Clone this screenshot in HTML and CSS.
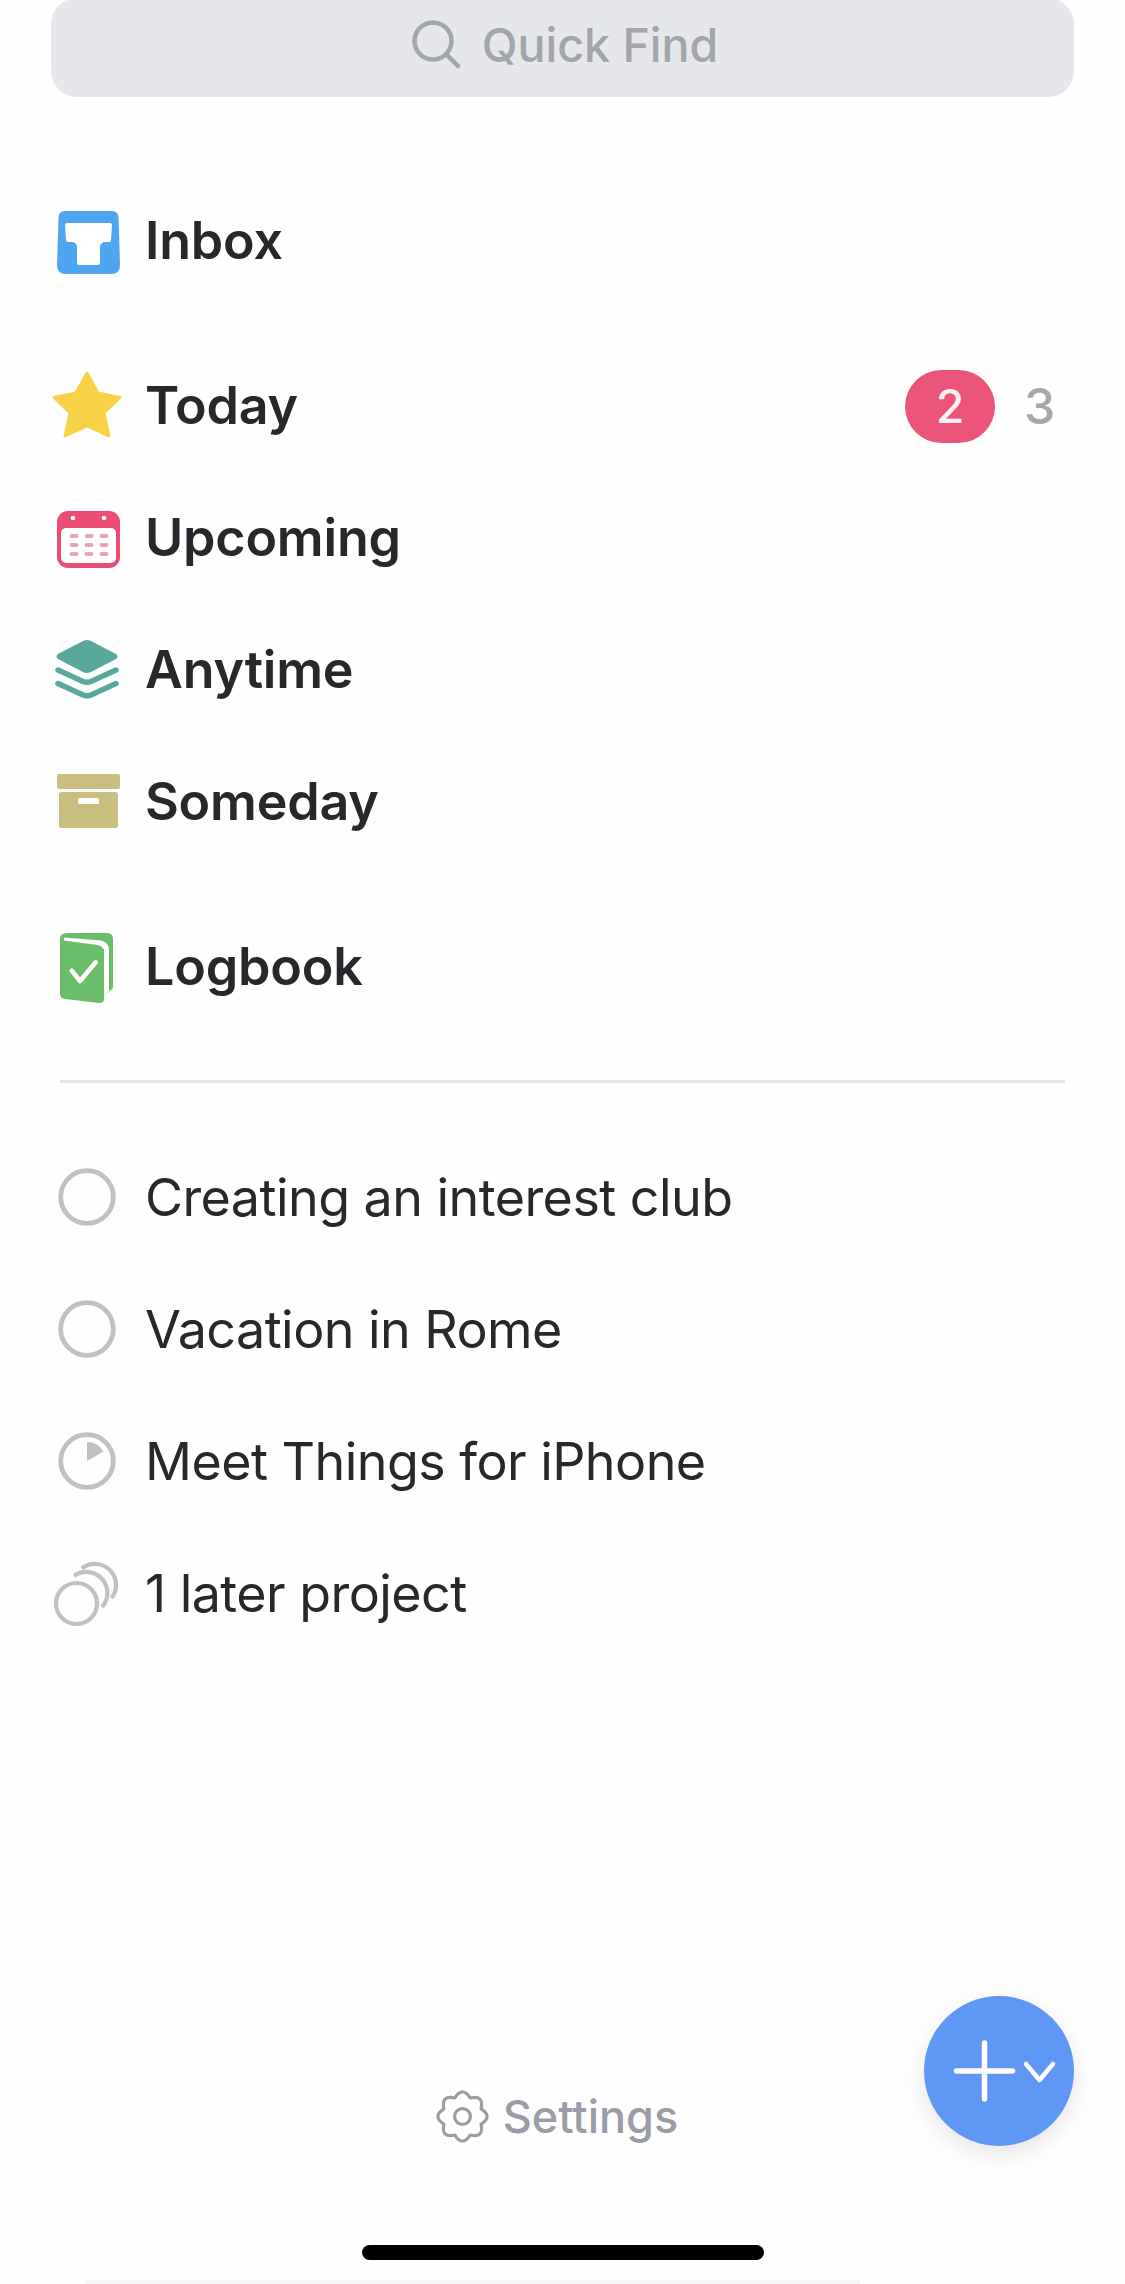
FILE: index.html
```html
<!DOCTYPE html>
<html lang="en">
<head>
<meta charset="utf-8">
<title>Things</title>
<link rel="stylesheet" href="styles.css">
</head>
<body>
<main class="page">
  <div class="search">
    <svg class="search-icon" width="50" height="50" viewBox="0 0 50 50"><circle cx="21" cy="21" r="18.5"/><path d="M34.5 34.5 L46 46"/></svg>
    <span>Quick Find</span>
  </div>

  <nav class="group group-first">
    <div class="row strong">
      <svg class="icon" viewBox="0 0 94 94"><path fill="#4fa5f0" d="M14 18 H61 Q67 18 67.500 24 L69 72 Q69 81 60 81 H15 Q6 81 6 72 L7.500 24 Q8 18 14 18Z"/><path fill="#fff" d="M16 30 H59 a2 2 0 0 1 2 2 L60 47 a2 2 0 0 1 -2 2 H54 a5 5 0 0 0 -5 5 V70 a2 2 0 0 1 -2 2 H28 a2 2 0 0 1 -2 -2 V54 a5 5 0 0 0 -5 -5 H17 a2 2 0 0 1 -2 -2 L14 32 a2 2 0 0 1 2 -2Z"/></svg>
      <span class="label">Inbox</span>
    </div>
  </nav>

  <nav class="group">
    <div class="row strong">
      <svg class="icon" viewBox="0 0 94 94"><path fill="#f7d247" stroke="#f7d247" stroke-width="3" stroke-linejoin="round" d="M36 15 L47 35 L69 39.5 L53 55 L58 78 L36 68 L14 78 L19 55 L3 39.5 L25 35Z"/></svg>
      <span class="label">Today</span>
      <span class="badge">2</span>
      <span class="count">3</span>
    </div>
    <div class="row strong">
      <svg class="icon" viewBox="0 0 94 94"><rect x="6" y="21" width="63" height="57" rx="11" fill="#ea4c72"/><rect x="10" y="38" width="55" height="35" rx="5" fill="#fff"/><circle cx="22" cy="28" r="2.3" fill="#fff"/><circle cx="53" cy="28" r="2.3" fill="#fff"/><g fill="#f0a0bb"><rect x="18.500" y="44" width="9" height="4" rx="2"/><rect x="33.500" y="44" width="9" height="4" rx="2"/><rect x="48.500" y="44" width="9" height="4" rx="2"/><rect x="18.500" y="53" width="9" height="4" rx="2"/><rect x="33.500" y="53" width="9" height="4" rx="2"/><rect x="48.500" y="53" width="9" height="4" rx="2"/><rect x="18.500" y="62" width="9" height="4" rx="2"/><rect x="33.500" y="62" width="9" height="4" rx="2"/><rect x="48.500" y="62" width="9" height="4" rx="2"/></g></svg>
      <span class="label">Upcoming</span>
    </div>
    <div class="row strong">
      <svg class="icon" viewBox="0 0 94 94"><path fill="#59a89c" d="M32 19 Q36 17 40 19 L65 32 Q68 34.500 65 37 L40 50 Q36 52 32 50 L7 37 Q4 34.500 7 32Z"/><path fill="none" stroke="#59a89c" stroke-width="5.500" stroke-linecap="round" d="M7 48 L32 59.500 Q36 61 40 59.500 L65 48 M7 61.500 L32 73 Q36 74.500 40 73 L65 61.500"/></svg>
      <span class="label">Anytime</span>
    </div>
    <div class="row strong">
      <svg class="icon" viewBox="0 0 94 94"><rect x="6" y="20" width="63" height="15" rx="2" fill="#cabf80"/><rect x="8" y="38" width="59" height="36" rx="2.500" fill="#cabf80"/><rect x="27" y="44" width="21" height="6" rx="1.500" fill="#fff"/></svg>
      <span class="label">Someday</span>
    </div>
  </nav>

  <nav class="group">
    <div class="row strong">
      <svg class="icon" viewBox="0 0 94 94"><path fill="#6bbd6a" d="M16 14 H56 Q62 14 62 20 V68 Q62 70 60 71 L53 76 V40 H9 V20 Q9 14 16 14Z"/><path fill="#fff" d="M13 18.500 L50 21.500 Q58 23 58 32 V72 L53 76 V30 L13 25Z"/><path fill="#6bbd6a" d="M9 21 L47 26 Q53 28 53 34 V80 Q53 84 48 84 L14 80 Q9 79 9 75Z"/><path fill="none" stroke="#fff" stroke-width="4.500" stroke-linecap="round" stroke-linejoin="round" d="M20.700 51.700 L29 62 L44.700 43.300"/></svg>
      <span class="label">Logbook</span>
    </div>
  </nav>

  <hr class="divider">

  <section class="projects">
    <div class="row">
      <svg class="icon" viewBox="0 0 94 94"><circle class="ring" cx="36" cy="47" r="26.300"/></svg>
      <span class="label">Creating an interest club</span>
    </div>
    <div class="row">
      <svg class="icon" viewBox="0 0 94 94"><circle class="ring" cx="36" cy="47" r="26.300"/></svg>
      <span class="label">Vacation in Rome</span>
    </div>
    <div class="row">
      <svg class="icon" viewBox="0 0 94 94"><circle class="ring" cx="36" cy="47" r="26.300"/><path fill="#bfc2c4" d="M36 47 V28 A19 19 0 0 1 52.500 37.500Z"/></svg>
      <span class="label">Meet Things for iPhone</span>
    </div>
    <div class="row">
      <svg class="icon" viewBox="0 0 94 94"><circle class="ring thin" cx="25.500" cy="57.500" r="20.500"/><path class="ring thin" d="M23 30 A21 21 0 0 1 51 61"/><path class="ring thin" d="M31 22.500 A21 21 0 0 1 60.500 52"/></svg>
      <span class="label">1 later project</span>
    </div>
  </section>

  <footer class="footer">
    <div class="settings">
      <svg class="gear" width="57" height="57" viewBox="-27 -27 54 54"><path d="M-7.300 -17.600 Q0 -29 7.300 -17.600 Q20.500 -20.500 17.600 -7.300 Q29 0 17.600 7.300 Q20.500 20.500 7.300 17.600 Q0 29 -7.300 17.600 Q-20.500 20.500 -17.600 7.300 Q-29 0 -17.600 -7.300 Q-20.500 -20.500 -7.300 -17.600Z"/><circle r="7.500"/></svg>
      <span>Settings</span>
    </div>
    <div class="home-bar"></div>
    <div class="edge"></div>
  </footer>

  <button class="fab" type="button" aria-label="Add">
    <svg width="150" height="150" viewBox="0 0 150 150"><path d="M60.500 47 V103 M32.500 75 H88.500" stroke-width="5.500"/><path d="M102 68 L115.500 84 L129 68" stroke-width="4.500"/></svg>
  </button>
</main>
</body>
</html>
```

FILE: styles.css
```css
* { box-sizing: border-box; }
html, body { margin: 0; padding: 0; background: #fff; }
body { font-family: Inter, "Liberation Sans", sans-serif; color: #26282b; }

.page {
  position: relative;
  width: 1125px;
  height: 2284px;
  overflow: hidden;
  display: flex;
  flex-direction: column;
  background: #fefefe;
}

.search {
  flex: none;
  height: 99px;
  margin: -2px 51px 0;
  background: #e5e7ea;
  border-radius: 26px;
  display: flex;
  align-items: center;
  justify-content: center;
  gap: 20px;
  padding: 0 0 5px 5px;
  font-size: 46.500px;
  font-weight: 500;
  color: #a2a5a9;
}
.search-icon { fill: none; stroke: #a2a5a9; stroke-width: 4.500; stroke-linecap: round; }

.group { margin-top: 33px; padding: 0 51px; }
.group-first { margin-top: 77px; }

.row {
  height: 132px;
  display: flex;
  align-items: center;
  font-size: 52px;
  font-weight: 400;
  letter-spacing: -0.55px;
}
.row.strong { font-weight: 600; letter-spacing: -0.2px; }
.icon { flex: none; width: 94px; height: 94px; overflow: visible; }
.label { flex: 1; white-space: nowrap; }

.badge {
  flex: none;
  width: 90px;
  height: 73px;
  margin-top: 2px;
  border-radius: 37px;
  background: #ea5579;
  color: #f8f0f3;
  font-size: 46px;
  font-weight: 500;
  display: flex;
  align-items: center;
  justify-content: center;
}
.count {
  flex: none;
  width: 59px;
  margin-top: 2px;
  padding-left: 29px;
  margin-right: 20px;
  color: #a5a7aa;
  font-size: 50px;
  font-weight: 500;
}

.divider {
  flex: none;
  height: 3px;
  margin: 48px 60px 48px;
  border: 0;
  background: #e3e4e4;
}

.projects { padding: 0 51px; }
.ring { fill: none; stroke: #bfc2c4; stroke-width: 4.800; }
.ring.thin { stroke-width: 4.200; }

.footer {
  margin-top: auto;
  display: flex;
  flex-direction: column;
}
.settings {
  height: 60px;
  display: flex;
  align-items: center;
  justify-content: center;
  gap: 12px;
  padding-right: 13px;
  color: #9a9da5;
  font-size: 45px;
  font-weight: 500;
}
.gear { fill: none; stroke: #9a9da5; stroke-width: 3; stroke-linejoin: round; }
.home-bar {
  width: 402px;
  height: 15px;
  margin: 99px auto 20px;
  border-radius: 8px;
  background: #000;
}
.edge {
  height: 4px;
  margin: 0 265px 0 85px;
  background: #f6f6f6;
}

.fab {
  position: absolute;
  right: 51px;
  top: 1996px;
  width: 150px;
  height: 150px;
  padding: 0;
  border: 0;
  border-radius: 50%;
  background: #5f98f4;
  box-shadow: 0 8px 24px rgba(0, 0, 0, 0.10);
}
.fab svg { display: block; fill: none; stroke: #fff; stroke-linecap: round; stroke-linejoin: round; }
```
